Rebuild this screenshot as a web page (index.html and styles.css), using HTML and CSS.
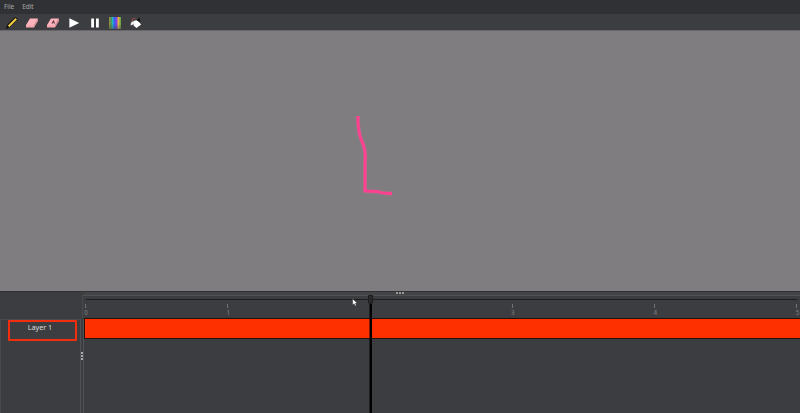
FILE: index.html
```html
<!DOCTYPE html>
<html lang="en">
<head>
<meta charset="utf-8">
<title>Animation</title>
<link rel="stylesheet" href="styles.css">
</head>
<body>
<div class="app">
  <nav class="menu"><span>File</span><span>Edit</span></nav>
  <div class="toolbar">
    <svg class="tool" viewBox="0 0 14 14"><path d="M1 13L2 9L10 1L13 3L5 11Z" fill="#111"/><path d="M3.5 10.5L11.2 2.8" stroke="#f5cf3d" stroke-width="2"/><path d="M1.5 12.5L3 10L4.3 11.2Z" fill="#111"/></svg>
    <svg class="tool" viewBox="0 0 14 14"><path d="M5 2.5H13L9 9H1Z" fill="#ffb5bd"/><path d="M1 9H9V11.5H1Z" fill="#f9a8b1"/><path d="M9 9L13 2.5V5L9 11.5Z" fill="#e89da6"/></svg>
    <svg class="tool" viewBox="0 0 14 14"><path d="M5 2.5H13L9 9H1Z" fill="#ffb5bd"/><path d="M1 9H9V11.5H1Z" fill="#f9a8b1"/><path d="M9 9L13 2.5V5L9 11.5Z" fill="#e89da6"/><path d="M6 7.5L7.5 5L8.5 7.5" stroke="#673b45" stroke-width="1.2" fill="none"/></svg>
    <svg class="tool" viewBox="0 0 14 14"><path d="M2.4 2.3L12.2 7L2.4 11.8Z" fill="#fff"/></svg>
    <svg class="tool" viewBox="0 0 14 14"><path d="M3.2 2.5H6V11.5H3.2ZM8 2.5H10.8V11.5H8Z" fill="#fff"/></svg>
    <span class="palette"></span>
    <svg class="tool" viewBox="0 0 14 14"><path d="M3 6V4Q4 2 6.5 2.5" fill="none" stroke="#87484c" stroke-width="1.3"/><path d="M4.5 5L8 4L12.2 8.5L7.5 12L4.5 9.5Z" fill="#fff"/><path d="M7.5 4.5L10.5 1.5L11.3 6Z" fill="#111"/><path d="M4.5 5C2.2 5.5 1.3 7.5 1.8 9.5L5 8Z" fill="#eee"/></svg>
  </div>
  <main class="canvas">
    <svg viewBox="0 0 800 260"><path d="M358 85V92Q359 105 363 113Q366 120 365 131V160L378 160.7Q382 162.3 392 162.5" fill="none" stroke="#a97489" stroke-width="4"/><path d="M358 85V92Q359 105 363 113Q366 120 365 131V160L378 160.7Q382 162.3 392 162.5" fill="none" stroke="#ff3f90" stroke-width="2.8"/></svg>
  </main>
  <section class="timeline">
    <aside class="layers"><div class="layer">Layer 1</div></aside>
    <div class="split"><i></i><i></i><i></i></div>
    <div class="tracks">
      <div class="handle"><i></i><i></i><i></i></div>
      <div class="ruler"><span>0</span><span>1</span><span class="covered">2</span><span>3</span><span>4</span><span>5</span></div>
      <div class="track"></div>
      <div class="playhead"></div>
      <div class="grip"></div>
    </div>
  </section>
  <svg class="cursor" viewBox="0 0 7 10"><path d="M.7.7V8L2.5 6.5L3.7 9L5 8.4L4 6H6.2Z" fill="#fff" stroke="#222" stroke-width=".5"/></svg>
</div>
</body>
</html>
```
FILE: styles.css
```css
* { box-sizing: border-box; }
body { margin: 0; font-family: "Noto Sans", sans-serif; background: #3c3d40; }
.app { position: relative; display: flex; flex-direction: column; width: 800px; height: 413px; overflow: hidden; }
.menu { display: flex; gap: 8px; height: 14px; padding-left: 4px; background: #303134; color: #aaa; font-size: 6.4px; line-height: 13px; }
.toolbar { display: flex; gap: 6.8px; align-items: center; height: 17px; padding: 1px 0 0 4.5px; background: #3c3d40; border-bottom: 1px solid #68666a; }
.tool { width: 14px; height: 14px; flex: none; }
.palette { width: 12px; height: 12px; margin: 0 1px; background: linear-gradient(transparent 55%, #4447), linear-gradient(90deg, #958b42 0 10%, #3b9b64 14% 24%, #28b9cc 30%, #3365ef 42% 52%, #8b41dc 58% 68%, #e0b446 74% 84%, #72a644 90%); }
.canvas { height: 260px; background: #807d80; }
.canvas svg { display: block; width: 800px; height: 260px; }
.timeline { display: flex; flex: 1; min-height: 0; border-top: 1px solid #303033; }
.layers { flex: none; width: 80px; margin-top: 27px; border-top: 1px solid #4a4a4d; border-left: 1px solid #4a4a4d; padding-left: 7px; }
.layer { width: 69px; height: 21px; border: 2px solid #f32d0d; color: #ddd; text-align: center; font-size: 7.2px; line-height: 11px; padding-right: 5px; }
.split { flex: none; width: 4px; margin-top: 27px; border-left: 1px solid #505154; border-right: 1px solid #505154; padding-top: 33px; }
.split i { display: block; width: 2px; height: 2px; margin-bottom: 1px; background: #aaa; }
.tracks { position: relative; flex: 1; min-width: 0; }
.handle { display: flex; gap: 1px; height: 3px; padding-left: 312px; background: #434447; }
.handle i { width: 2px; height: 2px; background: #999; }
.ruler { display: grid; grid-template-columns: repeat(5, 142.3px) 8px; height: 23px; margin-left: -2px; border-top: 1px solid #505154; border-left: 1px solid #4a4a4d; background: linear-gradient(#1c1c1f, #1c1c1f) 3px 3px / 711px 1px no-repeat; }
.ruler span { position: relative; padding-top: 12px; width: 6px; text-align: center; color: #818185; font-size: 6.2px; line-height: 10px; }
.ruler span::before { content: ""; position: absolute; left: 2px; top: 8px; width: 1px; height: 4px; background: #727276; }
.ruler .covered { visibility: hidden; }
.track { height: 21px; background: #ff3000; border: 1px solid #24110e; border-right: 0; }
.playhead { position: absolute; left: 286px; top: 12px; bottom: 0; width: 2px; background: #000; box-shadow: -.5px 0 #000; }
.grip { position: absolute; left: 284px; top: 3px; width: 5px; height: 9px; background: #29292b; border: 1px solid #1d1d20; border-radius: 0 0 2px 2px; }
.cursor { position: absolute; left: 352px; top: 298px; width: 6px; height: 9px; }
```
